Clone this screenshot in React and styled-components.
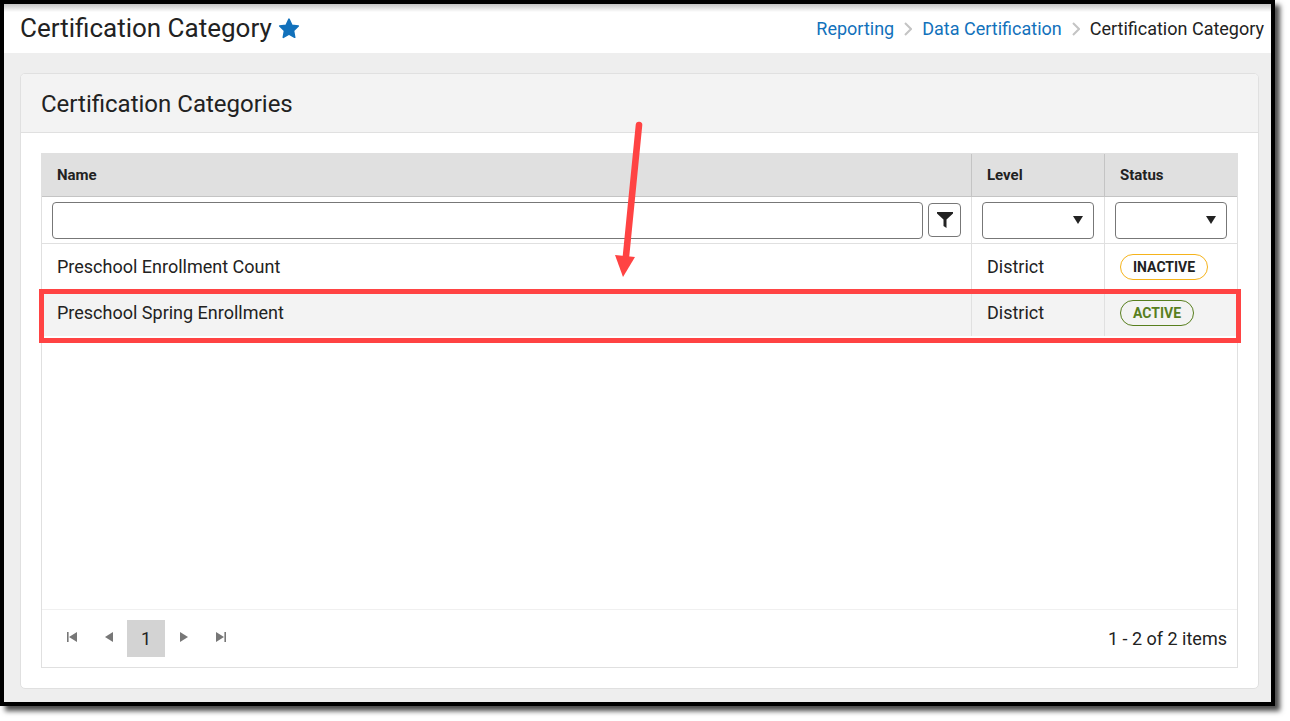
import React, { useState } from "react";

import styled, { createGlobalStyle } from "styled-components";

const categories = [
  { name: "Preschool Enrollment Count", level: "District", status: "Inactive" },
  {
    name: "Preschool Spring Enrollment",
    level: "District",
    status: "Active",
    marked: true,
  },
];

const FilterSelect = ({ label, options }) => (
  <SelectWrap>
    <Select aria-label={label} defaultValue="">
      <option value="" />
      {options.map((option) => (
        <option key={option}>{option}</option>
      ))}
    </Select>
    <svg width="10" height="8" viewBox="0 0 10 8" aria-hidden="true">
      <path d="M0 0h10L5 8z" fill="#222" />
    </svg>
  </SelectWrap>
);

const Chevron = () => (
  <svg width="8" height="14" viewBox="0 0 8 14" aria-hidden="true">
    <path d="M1 1l6 6-6 6" fill="none" stroke="#c4c4c4" strokeWidth="2" />
  </svg>
);

const pagerPaths = {
  first: "M0 0h1.6v10H0zM10 0v10L2 5z",
  previous: "M9 0v10L1 5z",
  next: "M1 0v10l8-5z",
  last: "M8.4 0H10v10H8.4zM0 0v10l8-5z",
};

const PagerArrow = ({ kind }) => (
  <PagerButton type="button" aria-label={`Go to the ${kind} page`}>
    <svg width="10" height="10" viewBox="0 0 10 10" aria-hidden="true">
      <path d={pagerPaths[kind]} fill="#777" />
    </svg>
  </PagerButton>
);

const App = () => {
  const [filter, setFilter] = useState("");
  const rows = categories.filter((row) =>
    row.name.toLowerCase().includes(filter.toLowerCase())
  );

  return (
    <>
      <GlobalStyle />
      <Window>
        <Header>
          <Title>
            Certification Category
            <svg width="22" height="22" viewBox="0 0 22 22" aria-hidden="true">
              <path
                d="M11 2.200l2.800 6 6.500.8-4.800 4.600 1.200 6.700-5.700-3.200-5.700 3.200 1.200-6.700-4.800-4.600 6.500-.8z"
                fill="#1271bb"
                stroke="#1271bb"
                strokeWidth="1.6"
                strokeLinejoin="round"
              />
            </svg>
          </Title>
          <Breadcrumbs aria-label="Breadcrumb">
            <a href="#reporting">Reporting</a>
            <Chevron />
            <a href="#data-certification">Data Certification</a>
            <Chevron />
            <span>Certification Category</span>
          </Breadcrumbs>
        </Header>
        <Main>
          <Card>
            <CardHeader>Certification Categories</CardHeader>
            <CardBody>
              <Grid>
                <Table>
                  <colgroup>
                    <col />
                    <SideColumn />
                    <SideColumn />
                  </colgroup>
                  <thead>
                    <tr>
                      <HeadCell scope="col">Name</HeadCell>
                      <HeadCell scope="col">Level</HeadCell>
                      <HeadCell scope="col">Status</HeadCell>
                    </tr>
                    <tr>
                      <FilterCell>
                        <NameFilter>
                          <TextInput
                            type="text"
                            aria-label="Name filter"
                            value={filter}
                            onChange={(e) => setFilter(e.target.value)}
                          />
                          <FilterButton type="button" aria-label="Filter">
                            <svg
                              width="16"
                              height="16"
                              viewBox="0 0 16 16"
                              aria-hidden="true"
                            >
                              <path
                                d="M0 0h16v1.500L9.500 7.500V16L6.500 14V7.500L0 1.500z"
                                fill="#222"
                              />
                            </svg>
                          </FilterButton>
                        </NameFilter>
                      </FilterCell>
                      <FilterCell>
                        <FilterSelect
                          label="Level filter"
                          options={["District", "State"]}
                        />
                      </FilterCell>
                      <FilterCell>
                        <FilterSelect
                          label="Status filter"
                          options={["Active", "Inactive"]}
                        />
                      </FilterCell>
                    </tr>
                  </thead>
                  <tbody>
                    {rows.map((row) => (
                      <Row key={row.name}>
                        <Cell>{row.name}</Cell>
                        <Cell>{row.level}</Cell>
                        <Cell>
                          <Badge $active={row.status === "Active"}>
                            {row.status}
                          </Badge>
                          {row.marked && <RowMark />}
                        </Cell>
                      </Row>
                    ))}
                  </tbody>
                </Table>
                <Pager>
                  <PagerArrow kind="first" />
                  <PagerArrow kind="previous" />
                  <PagerButton type="button" $current aria-current="page">
                    1
                  </PagerButton>
                  <PagerArrow kind="next" />
                  <PagerArrow kind="last" />
                  <PagerInfo>1 - 2 of 2 items</PagerInfo>
                </Pager>
                <Arrow viewBox="0 0 32 160" aria-hidden="true">
                  <path
                    d="M25 7L12 138"
                    stroke="#ff4343"
                    strokeWidth="6.6"
                    strokeLinecap="round"
                  />
                  <path d="M1 137l20 2-12 20z" fill="#ff4343" />
                </Arrow>
              </Grid>
            </CardBody>
          </Card>
        </Main>
      </Window>
    </>
  );
};

const GlobalStyle = createGlobalStyle`
  * {
    box-sizing: border-box;
  }
  body {
    margin: 0;
    background: #fff;
    color: #222;
    font-family: Roboto, "Liberation Sans", sans-serif;
    font-size: 18px;
    line-height: 24px;
  }
  button, input, select {
    font: inherit;
    color: inherit;
  }
  svg {
    display: block;
    flex: none;
  }
`;

const Window = styled.div`
  display: flex;
  flex-direction: column;
  min-height: calc(100vh - 15px);
  margin: 0 15px 15px 0;
  border: 4px solid #000;
  background: #eee;
  box-shadow: 5px 5px 5px rgba(0, 0, 0, 0.7);
`;

const Header = styled.header`
  display: flex;
  align-items: center;
  justify-content: space-between;
  height: 49px;
  padding: 0 7px 0 16px;
  background: linear-gradient(#c4c4c4, #fff 8px);
`;

const Title = styled.h1`
  display: flex;
  align-items: center;
  gap: 6px;
  margin: 0;
  padding-bottom: 1px;
  font-size: 26px;
  font-weight: 400;
`;

const Breadcrumbs = styled.nav`
  display: flex;
  align-items: center;
  gap: 10px;
  & a {
    color: #1271bb;
    text-decoration: none;
  }
  & a:hover {
    text-decoration: underline;
  }
`;

const Main = styled.main`
  display: flex;
  flex: 1;
  padding: 20px 12px 13px 16px;
`;

const Card = styled.section`
  display: flex;
  flex-direction: column;
  flex: 1;
  min-width: 0;
  border: 1px solid #e0e0e0;
  border-radius: 5px;
  background: #fff;
`;

const CardHeader = styled.h2`
  display: flex;
  align-items: center;
  height: 59px;
  margin: 0;
  padding: 2px 20px 0;
  border-bottom: 1px solid #e0e0e0;
  border-radius: 4px 4px 0 0;
  background: #f3f3f3;
  font-size: 24px;
  font-weight: 400;
`;

const CardBody = styled.div`
  display: flex;
  flex: 1;
  padding: 20px;
`;

const Grid = styled.div`
  position: relative;
  display: flex;
  flex-direction: column;
  flex: 1;
  min-width: 0;
  border: 1px solid #e0e0e0;
`;

const Table = styled.table`
  width: 100%;
  table-layout: fixed;
  border-collapse: separate;
  border-spacing: 0;
`;

const SideColumn = styled.col`
  width: 133px;
`;

const HeadCell = styled.th`
  height: 43px;
  padding: 0 15px;
  border-bottom: 1px solid #c4c4c4;
  background: #e0e0e0;
  font-size: 15px;
  font-weight: 700;
  text-align: left;
  & + & {
    border-left: 1px solid #c4c4c4;
  }
`;

const FilterCell = styled.td`
  height: 47px;
  padding: 0 10px;
  border-bottom: 1px solid #e0e0e0;
  & + & {
    border-left: 1px solid #e0e0e0;
  }
`;

const NameFilter = styled.div`
  display: flex;
  align-items: center;
  gap: 5px;
`;

const TextInput = styled.input`
  flex: 1;
  min-width: 0;
  height: 37px;
  padding: 0 10px;
  border: 1px solid #777;
  border-radius: 4px;
  background: #fff;
`;

const FilterButton = styled.button`
  display: flex;
  align-items: center;
  justify-content: center;
  width: 33px;
  height: 34px;
  padding: 0;
  border: 1px solid #777;
  border-radius: 4px;
  background: #fff;
  cursor: pointer;
`;

const SelectWrap = styled.div`
  position: relative;
  & svg {
    position: absolute;
    top: 14px;
    right: 11px;
    pointer-events: none;
  }
`;

const Select = styled.select`
  display: block;
  width: 100%;
  height: 37px;
  padding: 0 24px 0 10px;
  border: 1px solid #777;
  border-radius: 4px;
  background: #fff;
  appearance: none;
`;

const Row = styled.tr`
  position: relative;
  background: #fff;
  &:nth-child(even) {
    background: #f3f3f3;
  }
`;

// Outlines the whole row, a little outside its edges
const RowMark = styled.span`
  position: absolute;
  inset: -1px -4px -7px -3px;
  border: 5px solid #ff4343;
  pointer-events: none;
`;

const Cell = styled.td`
  height: 46px;
  padding: 0 15px;
  & + & {
    border-left: 1px solid #e0e0e0;
  }
`;

const Badge = styled.span`
  display: flex;
  align-items: center;
  width: fit-content;
  height: 26px;
  padding: 0 12px;
  border: 1px solid ${({ $active }) => ($active ? "#587f1e" : "#f5b31b")};
  border-radius: 13px;
  color: ${({ $active }) => ($active ? "#587f1e" : "#222")};
  font-size: 14px;
  font-weight: 700;
  text-transform: uppercase;
`;

const Pager = styled.div`
  display: flex;
  align-items: center;
  height: 58px;
  margin-top: auto;
  padding: 0 10px 0 11px;
  border-top: 1px solid #f0f0f0;
`;

const PagerButton = styled.button`
  display: flex;
  align-items: center;
  justify-content: center;
  width: ${({ $current }) => ($current ? "38px" : "37px")};
  height: 37px;
  padding: ${({ $current }) => ($current ? "0" : "0 0 3px")};
  border: 0;
  background: ${({ $current }) => ($current ? "#d3d3d3" : "transparent")};
  cursor: pointer;
`;

const PagerInfo = styled.span`
  margin-left: auto;
`;

const Arrow = styled.svg`
  position: absolute;
  top: -36px;
  left: calc(50% - 26px);
  width: 32px;
  height: 160px;
  pointer-events: none;
`;

export default App;
